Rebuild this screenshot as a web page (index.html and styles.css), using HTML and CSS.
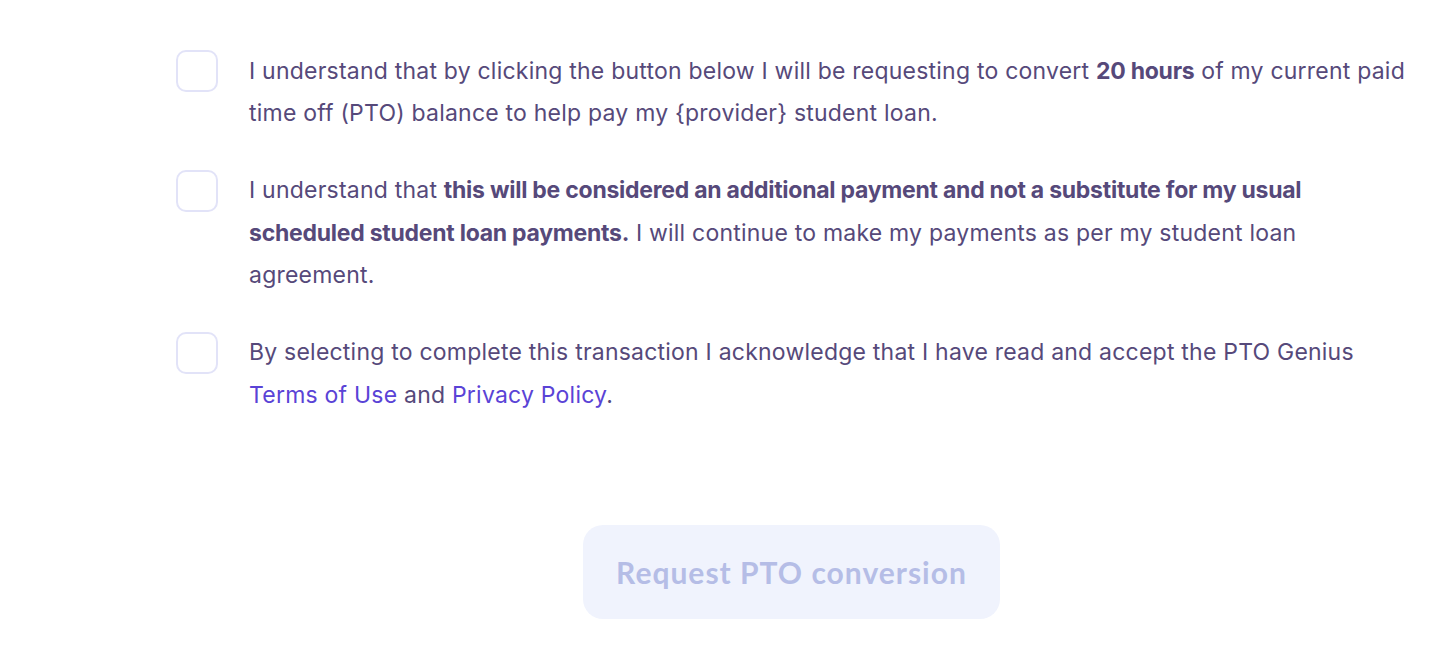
FILE: index.html
```html
<!DOCTYPE html>
<html>
<head>
<meta charset="utf-8">
<link rel="stylesheet" href="styles.css">
</head>
<body>
<div class="wrap">
  <div class="list">
    <label class="row">
      <span class="box"></span>
      <span class="text">I understand that by clicking the button below I will be requesting to convert <b>20 hours</b> of my current paid time off (PTO) balance to help pay my {provider} student loan.</span>
    </label>
    <label class="row">
      <span class="box"></span>
      <span class="text">I understand that <b>this will be considered an additional payment and not a substitute for my usual scheduled student loan payments.</b> I will continue to make my payments as per my student loan agreement.</span>
    </label>
    <label class="row">
      <span class="box"></span>
      <span class="text">By selecting to complete this transaction I acknowledge that I have read and accept the PTO Genius <a class="link" href="#">Terms of Use</a> and <a class="link" href="#">Privacy Policy</a>.</span>
    </label>
  </div>
  <div class="actions">
    <button class="btn" disabled>Request PTO conversion</button>
  </div>
</div>
</body>
</html>
```
FILE: styles.css
```css
html, body {
  margin: 0;
  padding: 0;
  background: #ffffff;
}
body {
  font-family: Inter, "Noto Sans", sans-serif;
  color: #56497a;
}
.wrap {
  width: 1231px;
  margin-left: 176px;
  padding-top: 50px;
}
.list {
  display: flex;
  flex-direction: column;
  gap: 35px;
}
.row {
  display: flex;
  align-items: flex-start;
  gap: 31px;
}
.box {
  flex: none;
  width: 38px;
  height: 38px;
  border: 2px solid #e2e3f8;
  border-radius: 10px;
  background: #fff;
}
.text {
  font-size: 23px;
  letter-spacing: 0.22px;
  line-height: 42.5px;
  width: 1168px;
  margin-top: -0.5px;
}
.text b {
  font-weight: 700;
  letter-spacing: -0.25px;
}
.link {
  color: #5a43d6;
  text-decoration: none;
}
.actions {
  display: flex;
  justify-content: center;
  margin-top: 109px;
}
.btn {
  width: 417px;
  height: 94px;
  border: none;
  border-radius: 20px;
  background: #f0f3fd;
  color: #b5bde6;
  font-family: Lato, Inter, sans-serif;
  font-weight: 700;
  font-size: 30px;
  letter-spacing: 1px;
}
```
